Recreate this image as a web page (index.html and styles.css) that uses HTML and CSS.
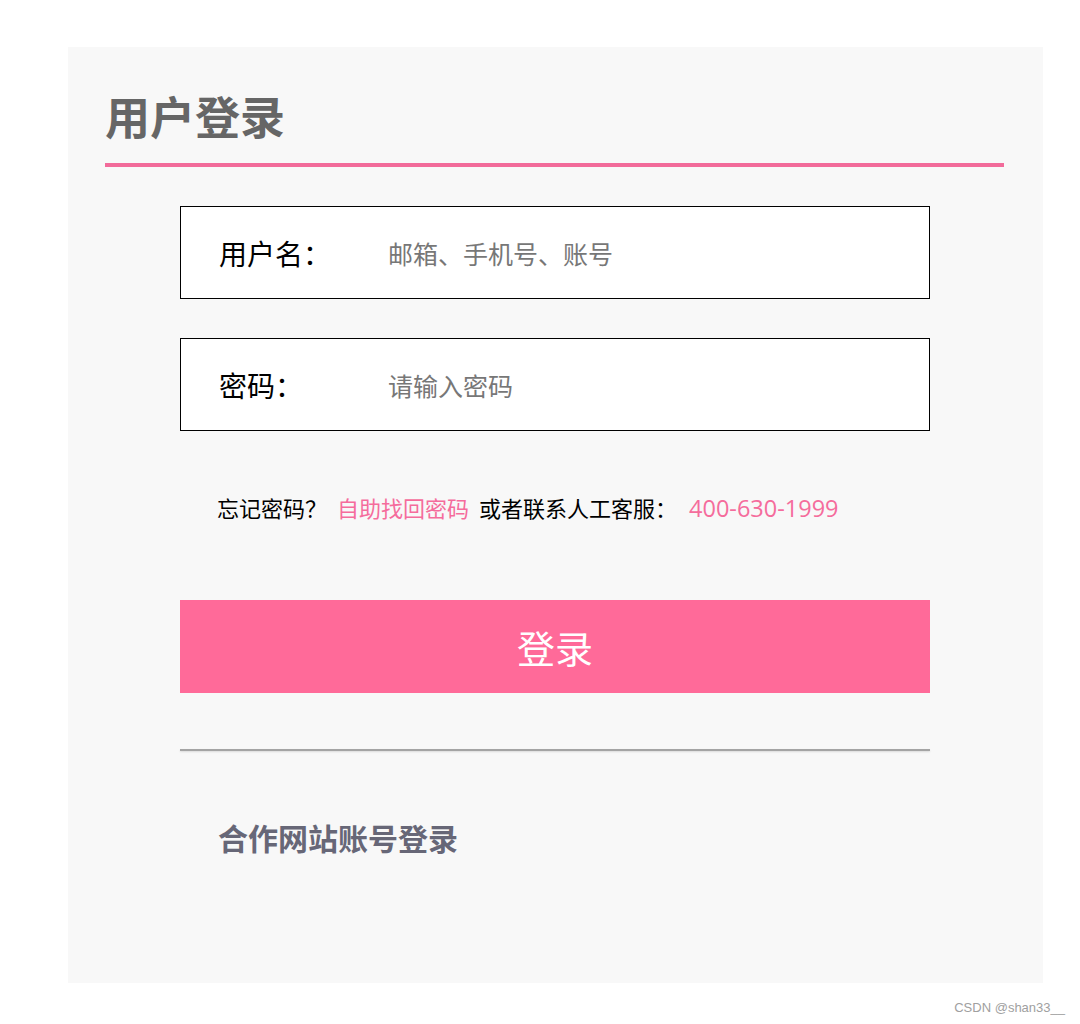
FILE: index.html
```html
<!DOCTYPE html>
<html lang="zh-CN">
<head>
<meta charset="utf-8">
<title>用户登录</title>
<link rel="stylesheet" href="styles.css">
</head>
<body>
<div class="panel">
  <h1 class="title">用户登录</h1>
  <div class="title-rule"></div>
  <form class="form">
    <div class="field">
      <label class="field-label">用户名：</label>
      <input class="field-input" type="text" placeholder="邮箱、手机号、账号">
    </div>
    <div class="field field-gap">
      <label class="field-label">密码：</label>
      <input class="field-input" type="password" placeholder="请输入密码">
    </div>
    <p class="help">忘记密码？<a class="link link-a">自助找回密码</a><span class="help-b">或者联系人工客服：</span><a class="link link-tel">400-630-1999</a></p>
    <button class="login-btn" type="button">登录</button>
    <div class="divider"></div>
    <h2 class="partner">合作网站账号登录</h2>
  </form>
</div>
<div class="watermark">CSDN @shan33__</div>
</body>
</html>
```
FILE: styles.css
```css
html, body {
  margin: 0;
  padding: 0;
  background: #ffffff;
}
body {
  position: relative;
  width: 1080px;
  height: 1024px;
  font-family: "Noto Sans CJK SC", "Noto Sans", sans-serif;
}
.panel {
  box-sizing: border-box;
  margin-left: 68px;
  margin-top: 47px;
  width: 975px;
  height: 936px;
  background: #f8f8f8;
  padding: 46px 39px 0 37px;
  display: flex;
  flex-direction: column;
}
.title {
  margin: 0;
  font-size: 45px;
  line-height: 1;
  font-weight: 700;
  color: #666666;
  height: 45px;
}
.title-rule {
  margin-top: 25px;
  height: 4px;
  background: #f26b9a;
}
.form {
  margin: 39px 0 0 75px;
  width: 750px;
  display: flex;
  flex-direction: column;
}
.field {
  box-sizing: border-box;
  height: 93px;
  border: 1px solid #000;
  background: #ffffff;
  display: flex;
  align-items: center;
  padding-left: 38px;
}
.field-gap {
  margin-top: 39px;
}
.field-label {
  width: 169px;
  flex: none;
  font-size: 28px;
  line-height: 1;
  color: #000;
}
.field-input {
  flex: 1;
  border: none;
  outline: none;
  background: transparent;
  font-family: "Noto Sans CJK SC", "Noto Sans", sans-serif;
  font-size: 25px;
  line-height: 1;
  padding: 0;
  color: #333;
}
.field-input::placeholder {
  color: #777777;
}
.help {
  margin: 65px 0 0 37px;
  font-size: 22px;
  line-height: 1;
  height: 22px;
  color: #000;
  white-space: nowrap;
}
.link {
  color: #f56c9c;
}
.link-a {
  margin-left: 10px;
}
.help-b {
  margin-left: 10px;
}
.link-tel {
  margin-left: 12px;
  font-family: "Open Sans", "Noto Sans", sans-serif;
  font-size: 23.5px;
}
.login-btn {
  margin-top: 82px;
  height: 93px;
  border: none;
  background: #ff6a99;
  color: #ffffff;
  font-family: "Noto Sans CJK SC", sans-serif;
  font-size: 38px;
  line-height: 1;
  padding: 0;
}
.divider {
  margin-top: 56px;
  height: 0;
  border-top: 2px solid #a4a4a4;
  box-shadow: 0 1px 2px rgba(0, 0, 0, 0.12);
}
.partner {
  margin: 71px 0 0 38px;
  font-size: 30px;
  line-height: 1;
  font-weight: 700;
  color: #676777;
}
.watermark {
  position: absolute;
  right: 15px;
  top: 1000px;
  font-family: "Liberation Sans", Arial, sans-serif;
  font-size: 13px;
  color: #a0a0a0;
}
```
